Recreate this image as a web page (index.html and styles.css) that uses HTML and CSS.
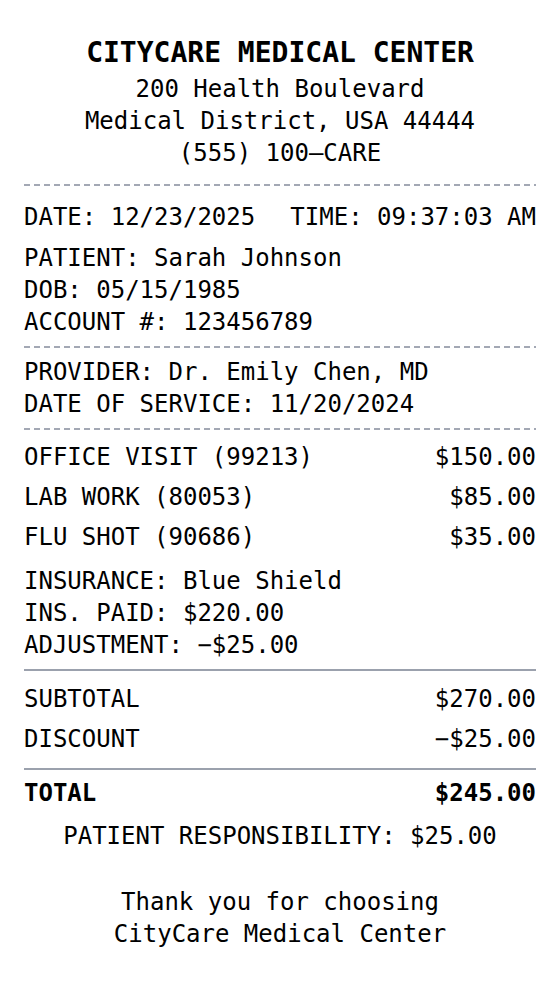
FILE: index.html
```html
<!DOCTYPE html>
<html>
<head>
<meta charset="utf-8">
<link rel="stylesheet" href="styles.css">
</head>
<body>
<div class="receipt">
  <header class="head">
    <div class="title">CITYCARE MEDICAL CENTER</div>
    <div>200 Health Boulevard</div>
    <div>Medical District, USA 44444</div>
    <div>(555) 100–CARE</div>
  </header>
  <div class="rule dashed"></div>
  <section class="meta">
    <div class="row date-row"><span>DATE: 12/23/2025</span><span>TIME: 09:37:03 AM</span></div>
    <div>PATIENT: Sarah Johnson</div>
    <div>DOB: 05/15/1985</div>
    <div>ACCOUNT #: 123456789</div>
  </section>
  <div class="rule dashed"></div>
  <section class="provider">
    <div>PROVIDER: Dr. Emily Chen, MD</div>
    <div>DATE OF SERVICE: 11/20/2024</div>
  </section>
  <div class="rule dashed"></div>
  <section class="items">
    <div class="row item"><span>OFFICE VISIT (99213)</span><span>$150.00</span></div>
    <div class="row item"><span>LAB WORK (80053)</span><span>$85.00</span></div>
    <div class="row item"><span>FLU SHOT (90686)</span><span>$35.00</span></div>
    <div class="insurance">
      <div>INSURANCE: Blue Shield</div>
      <div>INS. PAID: $220.00</div>
      <div>ADJUSTMENT: −$25.00</div>
    </div>
  </section>
  <div class="rule solid"></div>
  <section class="totals">
    <div class="row item"><span>SUBTOTAL</span><span>$270.00</span></div>
    <div class="row item"><span>DISCOUNT</span><span>−$25.00</span></div>
  </section>
  <div class="rule solid"></div>
  <section class="grand">
    <div class="row total"><span>TOTAL</span><span>$245.00</span></div>
    <div class="resp">PATIENT RESPONSIBILITY: $25.00</div>
  </section>
  <footer class="thanks">
    <div>Thank you for choosing</div>
    <div>CityCare Medical Center</div>
  </footer>
</div>
</body>
</html>
```
FILE: styles.css
```css
html, body {
  margin: 0;
  padding: 0;
  background: #ffffff;
}
body {
  width: 560px;
  font-family: "DejaVu Sans Mono", "Liberation Mono", monospace;
  font-size: 24px;
  line-height: 32px;
  color: #000000;
}
.receipt {
  padding: 33px 24px 40px;
}
.head {
  text-align: center;
  padding-bottom: 15px;
}
.title {
  font-size: 28px;
  font-weight: bold;
  line-height: 40px;
}
.rule {
  height: 2px;
}
.rule.dashed {
  background: repeating-linear-gradient(90deg, #a3a8b4 0 6px, transparent 6px 10px);
}
.rule.solid {
  background: #9ba1ad;
}
.row {
  display: flex;
  justify-content: space-between;
  white-space: pre;
}
.meta {
  padding: 15px 0 8px;
}
.date-row {
  margin-bottom: 9px;
}
.provider {
  padding: 8px 0 8px;
}
.items {
  padding: 11px 0 8px;
  display: flex;
  flex-direction: column;
  gap: 8px;
}
.insurance {
  margin-top: 4px;
}
.totals {
  padding: 12px 0 13px;
  display: flex;
  flex-direction: column;
  gap: 8px;
}
.grand {
  padding-top: 7px;
}
.total {
  font-weight: bold;
}
.resp {
  text-align: center;
  margin-top: 11px;
}
.thanks {
  text-align: center;
  margin-top: 34px;
}
```
